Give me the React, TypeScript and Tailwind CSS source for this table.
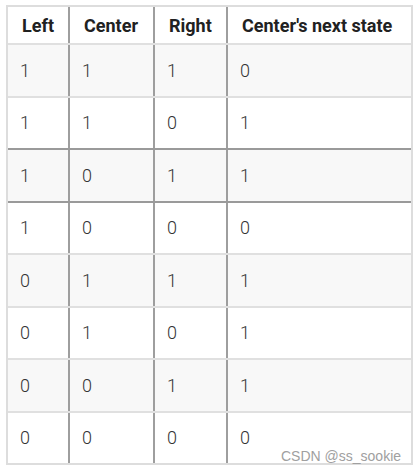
const rows = [
  ["1", "1", "1", "0"],
  ["1", "1", "0", "1"],
  ["1", "0", "1", "1"],
  ["1", "0", "0", "0"],
  ["0", "1", "1", "1"],
  ["0", "1", "0", "1"],
  ["0", "0", "1", "1"],
  ["0", "0", "0", "0"],
];

const headers = ["Left", "Center", "Right", "Center's next state"];
const widths = ["w-[62px]", "w-[85px]", "w-[73px]", "flex-1"];

export default function App() {
  return (
    <div className="relative w-[419px] h-[472px] bg-white pt-[5px] pl-[6px] font-['Roboto',sans-serif]">
      <div className="w-[407px] border-2 border-[#dddddd] flex flex-col">
        <div className="flex h-[36px] bg-white">
          {headers.map((h, i) => (
            <div
              key={h}
              className={`${widths[i]} flex items-center pl-[14px] text-[18px] font-bold text-[#212121] ${
                i < 3 ? "border-r-2 border-[#9e9e9e]" : ""
              }`}
            >
              {h}
            </div>
          ))}
        </div>
        {rows.map((r, ri) => (
          <div
            key={ri}
            className={`flex h-[52.5px] border-t-2 ${
              ri === 2 || ri === 3 ? "border-[#9a9a9a]" : "border-[#e0e0e0]"
            } ${ri % 2 === 0 ? "bg-[#f8f8f8]" : "bg-white"}`}
          >
            {r.map((v, i) => (
              <div
                key={i}
                className={`${widths[i]} flex items-center pl-[12px] text-[18px] font-light text-[#333333] ${
                  i < 3 ? "border-r-2 border-[#9e9e9e]" : ""
                }`}
              >
                {v}
              </div>
            ))}
          </div>
        ))}
      </div>
      <div className="absolute left-[281px] top-[446px] text-[14px] text-[#a0a0a0] font-['Liberation_Sans',sans-serif]">
        CSDN @ss_sookie
      </div>
    </div>
  );
}
